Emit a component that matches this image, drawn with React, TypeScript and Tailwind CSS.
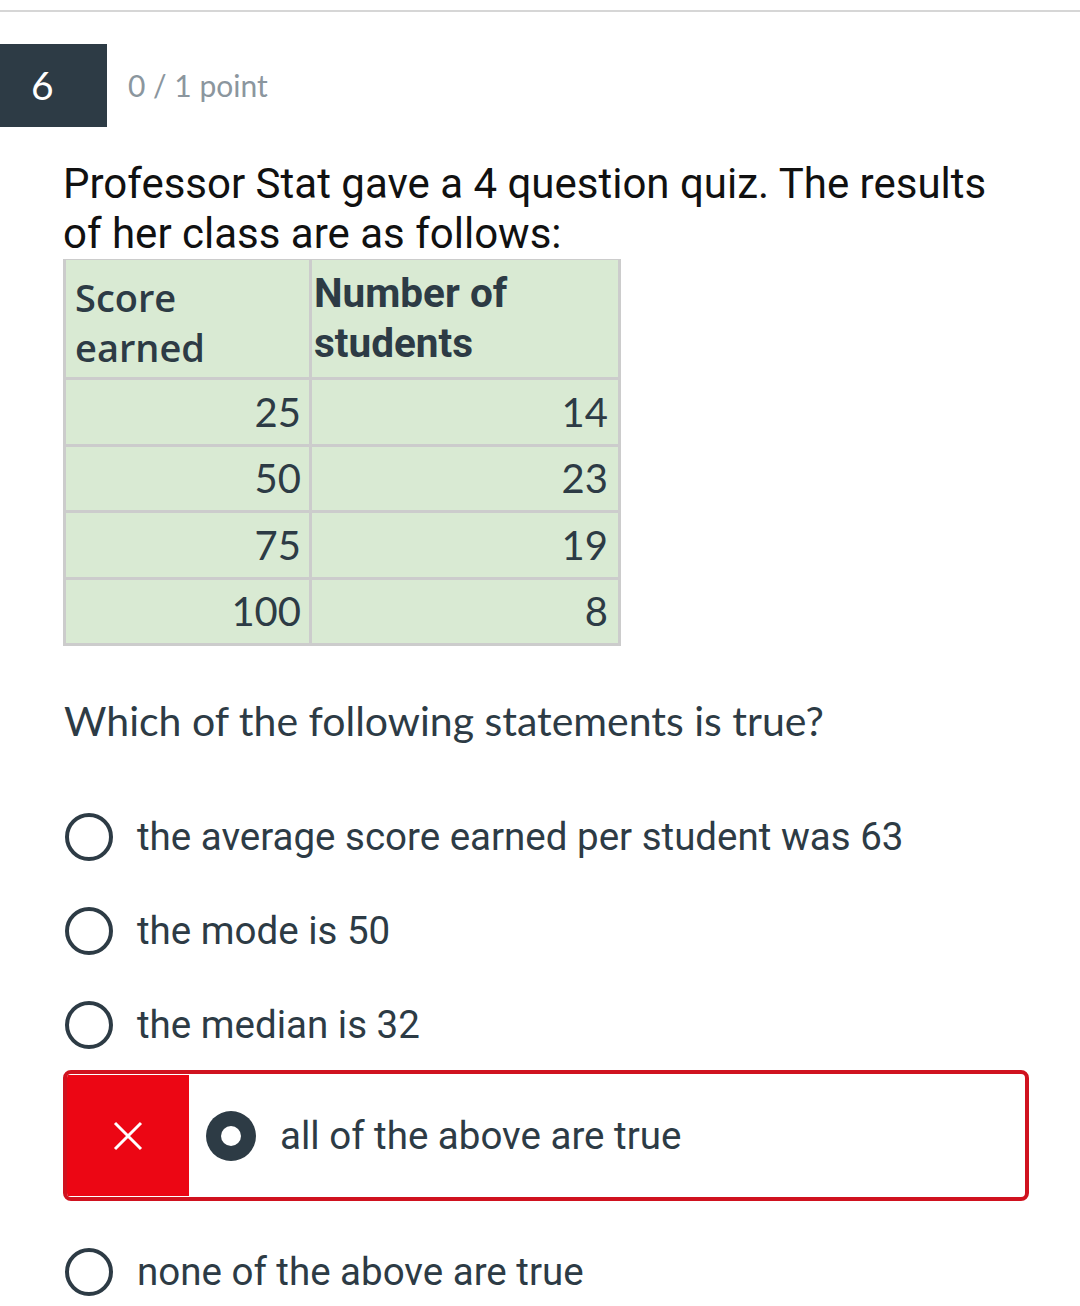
import React from "react";

const rows = [
  { score: "25", count: "14" },
  { score: "50", count: "23" },
  { score: "75", count: "19" },
  { score: "100", count: "8" },
];

function Radio() {
  return <span className="block w-[48px] h-[48px] shrink-0 rounded-full border-[4px] border-[#2d3b45]" />;
}

function Option({ label }: { label: string }) {
  return (
    <div className="flex items-center h-[94px] pl-[65px]">
      <Radio />
      <span className="ml-[24px] text-[38.5px] text-[#2d3b45] font-['Roboto',sans-serif]">{label}</span>
    </div>
  );
}

export default function App() {
  return (
    <div className="w-[1080px] h-[1306px] bg-white overflow-hidden font-['Roboto',sans-serif]">
      <div className="h-[2px] mt-[10px] bg-[#d6d6d6]" />

      <div className="flex items-center mt-[32px]">
        <div className="w-[107px] h-[83px] bg-[#2d3b45] flex items-center pl-[31px] text-white text-[39px] font-['Lato',sans-serif]">
          6
        </div>
        <span className="ml-[21px] text-[30px] text-[#8b969e] font-['Lato',sans-serif]">0 / 1 point</span>
      </div>

      <p className="relative z-10 mt-[32px] ml-[63px] w-fit pr-[2px] bg-white text-[42px] leading-[50px] text-[#111]">
        Professor Stat gave a 4 question quiz. The results
        <br />
        of her class are as follows:
      </p>

      <table className="-mt-[2px] ml-[63px] border-collapse border-[3px] border-[#cccccc] bg-[#d9ead3] text-[#2d3b45]">
        <tbody>
          <tr className="h-[120px]">
            <td className="w-[246px] border-[3px] border-[#cccccc] pl-[9px] align-top pt-[12px] text-[38px] leading-[50px] font-semibold font-['Open_Sans',sans-serif]">
              Score
              <br />
              earned
            </td>
            <td className="w-[309px] border-[3px] border-[#cccccc] pl-[2px] align-top pt-[8px] text-[40.5px] leading-[50px] font-bold font-['Roboto',sans-serif]">
              Number of
              <br />
              students
            </td>
          </tr>
          {rows.map((r) => (
            <tr key={r.score} className="h-[66.5px]">
              <td className="border-[3px] border-[#cccccc] pr-[8px] text-right text-[40px] font-['Lato',sans-serif]">
                {r.score}
              </td>
              <td className="border-[3px] border-[#cccccc] pr-[10px] text-right text-[40px] font-['Lato',sans-serif]">
                {r.count}
              </td>
            </tr>
          ))}
        </tbody>
      </table>

      <p className="mt-[51px] ml-[64px] text-[41px] leading-[48px] text-[#2d3b45] font-['Lato',sans-serif]">
        Which of the following statements is true?
      </p>

      <div className="mt-[45px]">
        <Option label="the average score earned per student was 63" />
        <Option label="the mode is 50" />
        <Option label="the median is 32" />
      </div>

      <div className="-mt-[2px] ml-[63px] w-[966px] h-[131px] flex items-stretch border-[4px] border-[#d0121f] rounded-[8px] overflow-hidden">
        <div className="w-[122px] my-[1px] bg-[#ec0614] flex items-center justify-center">
          <svg width="30" height="30" viewBox="0 0 30 30" fill="none" stroke="white" strokeWidth="3">
            <path d="M2 2 L28 28 M28 2 L2 28" />
          </svg>
        </div>
        <div className="flex items-center pl-[17px]">
          <span className="w-[50px] h-[50px] rounded-full bg-[#2d3b45] flex items-center justify-center">
            <span className="w-[20px] h-[20px] rounded-full bg-white" />
          </span>
          <span className="ml-[24px] text-[38.5px] text-[#2d3b45]">all of the above are true</span>
        </div>
      </div>

      <div className="mt-[24px]">
        <Option label="none of the above are true" />
      </div>
    </div>
  );
}
